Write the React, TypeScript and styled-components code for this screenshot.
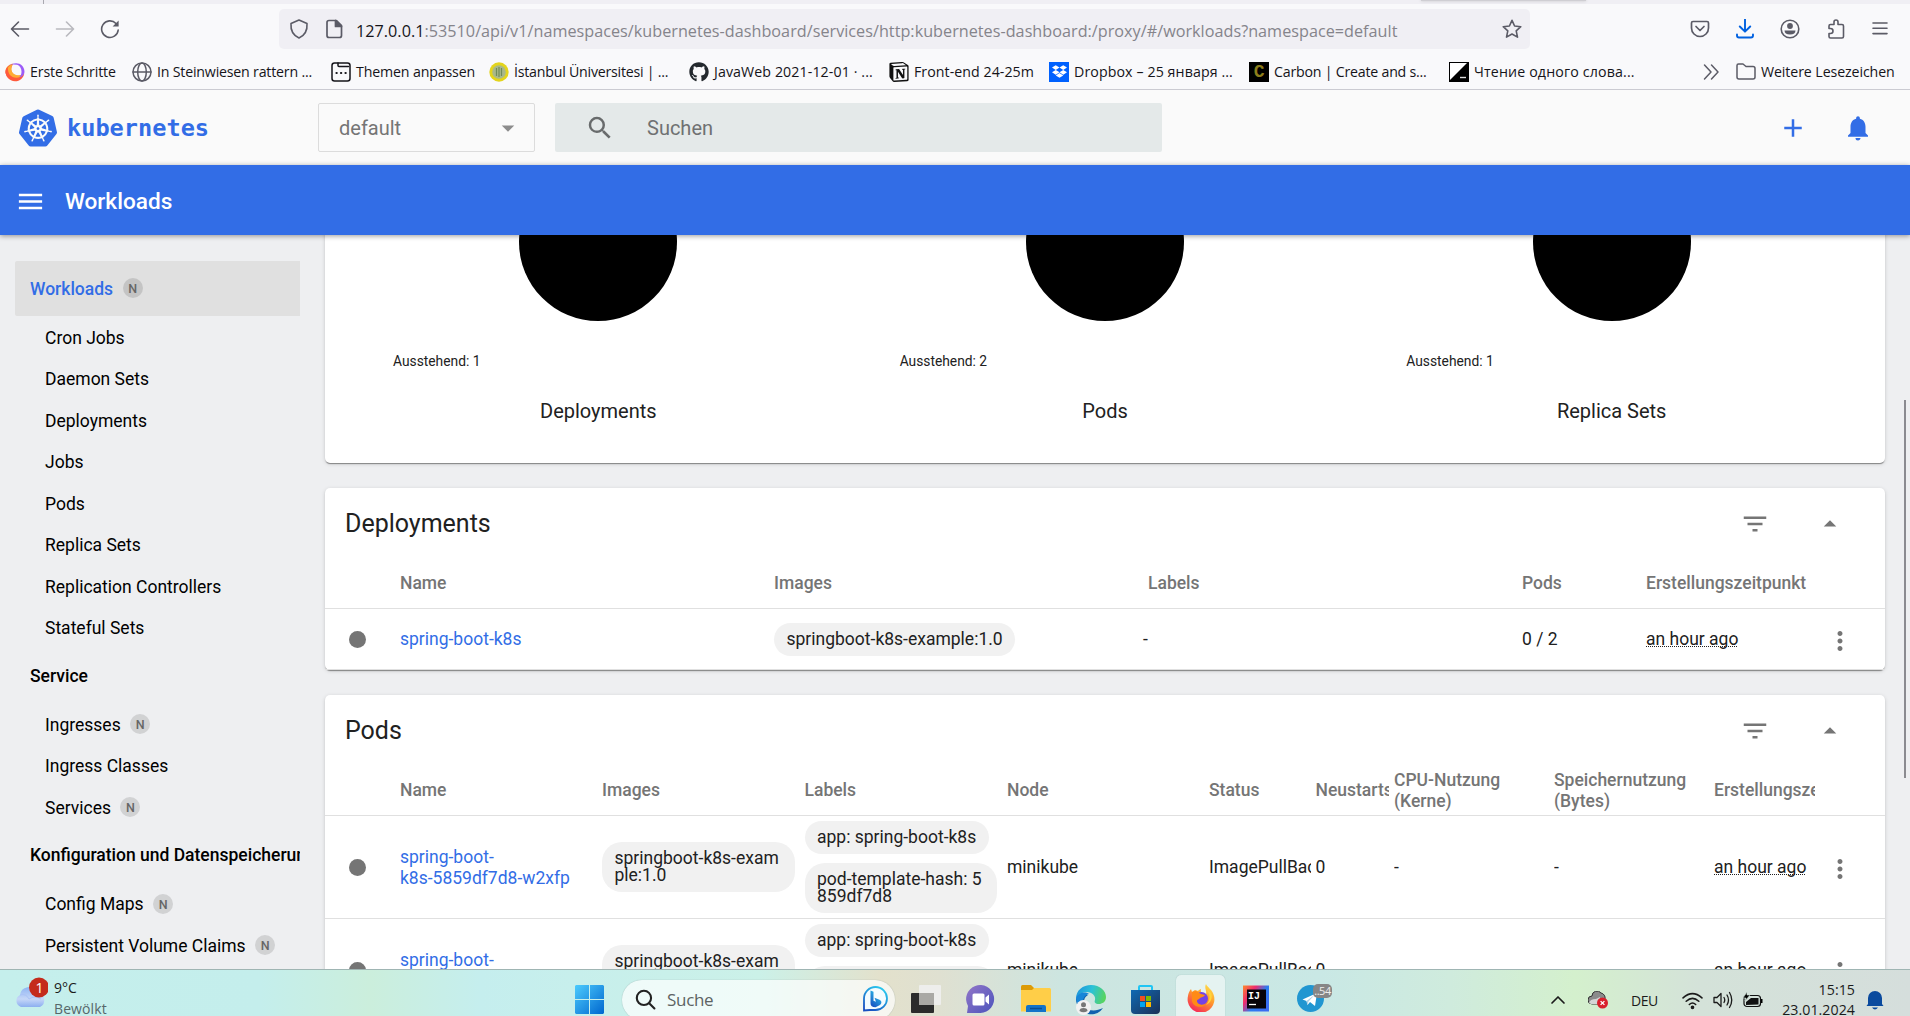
import React from "react";
import styled, { createGlobalStyle } from "styled-components";
import { MdAdd, MdNotifications, MdFilterList, MdArrowDropUp, MdArrowDropDown, MdMoreVert, MdSearch, MdMenu } from "react-icons/md";
import { SiKubernetes, SiNotion, SiDropbox } from "react-icons/si";
import { FaGithub } from "react-icons/fa";

const UI = `"Open Sans", "Noto Sans", sans-serif`;
const BLUE = "#326de6";

const Global = createGlobalStyle`
  * { box-sizing: border-box; }
  body { margin: 0; background: #eeeff1; overflow: hidden; }
  svg { display: block; flex: none; }
`;

const Screen = styled.div`
  width: 1910px;
  height: 1016px;
  overflow: hidden;
  display: flex;
  flex-direction: column;
  font-family: Roboto, sans-serif;
`;

/* ---------- browser chrome ---------- */
const TabEdge = styled.div`
  height: 4px;
  flex: none;
  background: #f0eff4;
  display: flex;
  i { margin-left: 43px; width: 1px; background: #a9a9b0; }
  b { margin-left: 1377px; width: 165px; height: 1px; background: #cfced3; box-shadow: 0 0 3px #aaa; }
`;
const NavBar = styled.div`
  height: 50px;
  flex: none;
  background: #f9f9fb;
  display: flex;
  align-items: center;
  color: #5b5b66;
`;
const NavSlot = styled.div<{ $w: number; $dim?: boolean; $c?: string }>`
  width: ${(p) => p.$w}px;
  flex: none;
  display: flex;
  justify-content: center;
  opacity: ${(p) => (p.$dim ? 0.4 : 1)};
  color: ${(p) => p.$c || "inherit"};
`;
const UrlBar = styled.div`
  width: 1251px;
  height: 40px;
  margin: 0 147px 0 150px;
  background: #f0eff4;
  border-radius: 5px;
  display: flex;
  align-items: center;
  padding-left: 2px;
`;
const Url = styled.div`
  flex: 1;
  padding: 3px 0 0 5px;
  font: 16.2px/24px ${UI};
  letter-spacing: 0.02px;
  color: #85848b;
  white-space: nowrap;
  span { color: #15141a; }
`;
const Bookmarks = styled.div`
  height: 36px;
  flex: none;
  background: #f9f9fb;
  border-bottom: 1px solid #cbcbd2;
  display: flex;
  align-items: center;
  padding-left: 5px;
`;
const Mark = styled.div<{ $w: number; $ls?: number }>`
  width: ${(p) => p.$w}px;
  flex: none;
  display: flex;
  align-items: center;
  gap: 5px;
  font: 14.2px/20px ${UI};
  letter-spacing: ${(p) => (p.$ls || 0) - 0.1}px;
  color: #15141a;
  white-space: nowrap;
  span { padding-top: 1px; }
`;
const DropTile = styled.div`
  width: 20px;
  height: 20px;
  background: #0061fe;
  color: #fff;
  display: flex;
  align-items: center;
  justify-content: center;
`;
const CarbonTile = styled.div`
  width: 20px;
  height: 20px;
  background: #000;
  color: #8d7f1c;
  font: bold 18px/20px "Liberation Mono", monospace;
  text-align: center;
`;

/* ---------- dashboard header ---------- */
const Header = styled.header`
  height: 75px;
  flex: none;
  background: #fafafa;
  display: flex;
  align-items: center;
  padding-left: 19px;
`;
const Brand = styled.div`
  width: 299px;
  display: flex;
  align-items: center;
  color: ${BLUE};
  font: bold 23.6px/30px "DejaVu Sans Mono", monospace;
  gap: 10px;
`;
const Namespace = styled.div`
  width: 217px;
  height: 49px;
  border: 1px solid #dcdcdc;
  border-radius: 2px;
  padding: 0 11px 0 20px;
  display: flex;
  align-items: center;
  justify-content: space-between;
  font-size: 20px;
  color: #757575;
`;
const SearchBox = styled.div`
  width: 607px;
  height: 49px;
  margin-left: 20px;
  background: #e4e9e9;
  border-radius: 2px;
  display: flex;
  align-items: center;
  gap: 32px;
  padding-left: 30px;
  font-size: 20px;
  color: #6f7172;
  span { padding-top: 1px; }
`;
const HeaderActions = styled.div`
  margin-left: auto;
  padding: 1px 37px 0 0;
  display: flex;
  gap: 35px;
  color: ${BLUE};
`;
const TitleBar = styled.div`
  height: 70px;
  flex: none;
  background: ${BLUE};
  color: #fff;
  display: flex;
  align-items: center;
  gap: 19px;
  padding: 2px 0 0 15px;
  font-size: 22.6px;
  font-weight: 500;
  box-shadow: 0 1px 5px rgba(0, 0, 0, 0.4);
  z-index: 1;
`;

/* ---------- sidebar ---------- */
const Body = styled.div`
  height: 734px;
  flex: none;
  display: flex;
  background: #eeeff1;
  overflow: hidden;
`;
const Side = styled.nav`
  width: 325px;
  flex: none;
  padding: 26px 25px 0 15px;
`;
const Group = styled.div<{ $active?: boolean }>`
  height: 55px;
  padding: 0 0 0 15px;
  border-radius: 2px 0 0 2px;
  background: ${(p) => (p.$active ? "#e0e0e0" : "transparent")};
  color: ${(p) => (p.$active ? BLUE : "#000")};
  display: flex;
  align-items: center;
  font-size: 17.5px;
  font-weight: 500;
  white-space: nowrap;
  overflow: hidden;
`;
const Item = styled.div`
  height: 41.5px;
  padding: 1.5px 0 0 30px;
  display: flex;
  align-items: center;
  font-size: 17.5px;
  color: #000;
`;
const Badge = styled.span`
  width: 20px;
  height: 20px;
  margin: 0 0 1px 9.5px;
  border-radius: 50%;
  background: rgba(0, 0, 0, 0.12);
  color: #666;
  font: 500 12.5px/22px Roboto, sans-serif;
  text-align: center;
`;

/* ---------- content ---------- */
const Content = styled.main`
  width: 1560px;
  flex: none;
  display: flex;
  flex-direction: column;
  gap: 25px;
`;
const Card = styled.section`
  flex: none;
  background: #fff;
  border-radius: 5px;
  box-shadow: 0 2px 1px -1px rgba(0, 0, 0, 0.28), 0 1px 1px rgba(0, 0, 0, 0.16), 0 1px 4px rgba(0, 0, 0, 0.14);
  color: #212121;
`;
const Charts = styled(Card)`
  height: 320px;
  margin-top: -92px;
  padding: 20px 20px 0;
  display: grid;
  grid-template-columns: repeat(3, 1fr);
`;
const Chart = styled.div`
  display: flex;
  flex-direction: column;
  align-items: center;
`;
const Disc = styled.div`
  width: 158px;
  height: 158px;
  border-radius: 50%;
  background: #000;
`;
const Legend = styled.div`
  align-self: flex-start;
  margin: 30px 0 0 48px;
  font-size: 13.8px;
  line-height: 20px;
`;
const ChartName = styled.div`
  margin-top: 28px;
  font-size: 20px;
  line-height: 24px;
`;
const CardHead = styled.div`
  height: 71px;
  display: flex;
  align-items: center;
  padding: 0 40px 0 20px;
  font-size: 25px;
  color: #212121;
  svg { color: #757575; }
  svg:first-of-type { margin-left: auto; margin-right: 45px; }
`;
const DEPLOY_COLS = "75px 374px 374px 374px 124px 169px 50px";
const POD_COLS = "75px 202px 202.5px 202.5px 202px 106.5px 78.5px 160px 160px 101px 50px";
const Row = styled.div<{ $cols: string; $h: number; $head?: boolean }>`
  display: grid;
  grid-template-columns: ${(p) => p.$cols};
  height: ${(p) => p.$h}px;
  border-bottom: 1px solid #e0e0e0;
  align-items: center;
  font-size: 17.5px;
  line-height: 21px;
  font-weight: ${(p) => (p.$head ? 500 : 400)};
  color: ${(p) => (p.$head ? "#757575" : "#212121")};
`;
const Cell = styled.div<{ $clip?: boolean }>`
  overflow: hidden;
  margin-right: ${(p) => (p.$clip ? 5 : 0)}px;
  white-space: nowrap;
`;
const Dash = styled.div`
  margin-left: -5px;
`;
const Dot = styled.div`
  width: 17px;
  height: 17px;
  margin-left: 24px;
  border-radius: 50%;
  background: #757575;
`;
const Link = styled.a<{ $two?: boolean }>`
  color: ${BLUE};
  padding-top: ${(p) => (p.$two ? 2 : 0)}px;
`;
const Ago = styled.span`
  text-decoration: underline dotted 1px;
  text-decoration-skip-ink: none;
  text-underline-offset: 1px;
`;
const Chips = styled.div`
  display: flex;
  flex-direction: column;
  align-items: flex-start;
  gap: 9px;
`;
const Chip = styled.div<{ $w?: number }>`
  width: ${(p) => (p.$w ? `${p.$w}px` : "auto")};
  padding: 8px 12.5px;
  border-radius: 20px;
  background: #f1f1f1;
  line-height: 17px;
  white-space: nowrap;
`;
const Menu = styled.div`
  display: flex;
  justify-content: center;
  color: #757575;
  padding-top: 3px;
`;
const ScrollThumb = styled.div`
  width: 2px;
  height: 378px;
  margin: 165px 0 0 19px;
  background: #8b8b90;
`;

/* ---------- taskbar ---------- */
const Taskbar = styled.footer`
  height: 47px;
  flex: none;
  border-top: 1px solid #9fb5b3;
  background: linear-gradient(90deg, #c5efec 0, #c4eeec 260px, #cbeedc 370px, #c5eeee 480px, #cbf1e8 760px, #e3e1cc 880px, #dfe0d1 940px, #cde5e0 1060px, #c9e8e5 1320px, #cfebdd 1450px, #d4f0cd 1575px, #d4e2d9 1700px, #d5dedc 1910px);
  font-family: ${UI};
  display: flex;
  color: #1b1b1b;
`;
const Weather = styled.div`
  width: 560px;
  flex: none;
  padding: 7px 0 0 13px;
  display: flex;
  gap: 6px;
  white-space: nowrap;
  font-size: 14px;
  line-height: 20px;
  div { padding-top: 1px; }
  small { font-size: 14px; line-height: 21px; color: #56676a; display: block; letter-spacing: 0.1px; }
`;
const Slot = styled.div<{ $w: number; $active?: boolean }>`
  width: ${(p) => p.$w}px;
  flex: none;
  position: relative;
  display: flex;
  justify-content: center;
  padding-top: 15px;
  ${(p) => p.$active && "margin: 5px 3px 0; padding-top: 9px; border-radius: 5px 5px 0 0; background: rgba(255,255,255,.5); box-shadow: 0 0 1px #8aa;"}
`;
const Pill = styled.div`
  width: 273px;
  height: 40px;
  flex: none;
  margin: 10px 3px 0;
  padding: 0 7px 2px 13px;
  border-radius: 20px;
  background: rgba(255, 255, 255, 0.7);
  box-shadow: 0 0 1px #8a9a98;
  display: flex;
  align-items: center;
  font-size: 17px;
  color: #5d6363;
  span { flex: 1; padding-left: 11px; letter-spacing: -0.3px; }
`;
const Count = styled.div`
  position: absolute;
  left: 30px;
  top: 14px;
  width: 19px;
  height: 14px;
  border-radius: 5px;
  background: #868686;
  color: #eee;
  font-size: 11px;
  line-height: 14px;
  text-align: center;
  letter-spacing: -0.5px;
`;
const Tray = styled.div`
  margin-left: auto;
  display: flex;
  align-items: center;
  height: 60px;
  padding-right: 25px;
`;
const Spacer = styled.div<{ $w: number }>`
  width: ${(p) => p.$w}px;
`;
const Lang = styled.div`
  margin: 0 23px;
  width: 28px;
  font-size: 14px;
  letter-spacing: -0.5px;
`;
const Clock = styled.div`
  width: 92px;
  margin-right: 10px;
  text-align: right;
  font-size: 14.2px;
  line-height: 20px;
  letter-spacing: 0.05px;
  white-space: nowrap;
`;

type P = { s?: number };
const Line = ({ d, s = 20, w = 1.6, c = "currentColor", children }: { d?: string; s?: number; w?: number; c?: string; children?: React.ReactNode }) => (
  <svg width={s} height={s} viewBox="0 0 20 20" fill="none" stroke={c} strokeWidth={w} strokeLinecap="round" strokeLinejoin="round">
    {d && <path d={d} />}
    {children}
  </svg>
);

const Firefox = ({ s = 28, light }: P & { light?: boolean }) => {
  const id = light ? "fl" : "fd";
  return (
    <svg width={s} height={s} viewBox="0 0 28 28">
      <defs>
        <linearGradient id={id} x1=".8" y1="0" x2=".25" y2="1">
          <stop offset="0" stopColor={light ? "#a95cf5" : "#ffe14a"} />
          <stop offset=".45" stopColor="#ff9a2c" />
          <stop offset="1" stopColor="#f5225c" />
        </linearGradient>
      </defs>
      {light ? (
        <>
          <path d="M10 2.500C4 4 0 9 .5 15.500a13.500 12.500 0 0 0 26.500-1C27 20 12 22 9 13 7 8 9 5 12 2Z" fill="url(#fl)" />
          <path d="M1 12c-1 8 5 15 13 15 7 0 12-5 13-11-4 5-13 6-17 0-2-4-2-9 1-13C6 4 2 7 1 12Z" fill="#ff5a3c" />
          <path d="M4 8c0 8 4 14 12 14 4 0 8-2 10-5-5 3-13 2-16-3-2-4-1-8 1-11C8 4 6 5 4 8Z" fill="#ffac33" />
          <path d="M9 3.500C18-2 29 5 27 15.500c-1 4-4 6-7 6 5-5 4-15-3-17.500q-4-1-8-.5Z" fill="#9c5cf8" />
        </>
      ) : (
        <>
          <path d="M19 0c1 3 7 6 8 12a13.400 13.400 0 1 1-26 0c.3-3 1.500-5 3-7l1 3 3-2 3 1c1-1 2-2 3-2-.5 2 0 3 1 4l4 1c1-3-2-6 0-10Z" fill={`url(#${id})`} />
          <circle cx="14.500" cy="14.500" r="6.500" fill="#7542e5" />
          <path d="M5 8l4-1 5 3 4 1c-1 2-4 2-5 3-1 2-3 1-3 3 0 3 5 5 9 3-4 5-13 3-14-3Z" fill="#ff8a16" />
          <path d="M20 6c4 5 3 11-1 15 5-2 7-8 5-12Z" fill="#ffd43a" />
        </>
      )}
    </svg>
  );
};

const Seal = () => (
  <svg width="20" height="20" viewBox="0 0 20 20">
    <circle cx="10" cy="10" r="9.700" fill="#e3d41c" />
    <circle cx="10" cy="10" r="6.800" fill="#a9b88a" />
    <path d="M7.500 6v8M10 5v10M12.500 6v8" stroke="#6f8a5a" strokeWidth="1.200" />
  </svg>
);

const Themes = () => (
  <Line s={20} c="#15141a" w={1.5}>
    <rect x="1" y="1" width="18" height="18" rx="2.500" />
    <path d="M7 1v2.500q0 1 1 1h9.500" />
    <path d="M5.500 11h.2M10 11h.2M14.500 11h.2" strokeWidth="2.200" />
  </Line>
);

const Globe = () => (
  <Line c="#5b5b66" w={1.5}>
    <circle cx="10" cy="10" r="9" />
    <ellipse cx="10" cy="10" rx="4.300" ry="9" />
    <path d="M1 10h18" />
  </Line>
);

const ReaderTile = () => (
  <svg width="20" height="20" viewBox="0 0 20 20">
    <path d="M0 0h20v20H0z" />
    <path d="M1 1h17L1 18z" fill="#fff" />
    <path d="M11 15.500h6" stroke="#ddd" strokeWidth="1.400" />
  </svg>
);

const Cloud = () => (
  <svg width="35" height="32" viewBox="0 0 35 32">
    <defs>
      <linearGradient id="cl" x1="0" y1="0" x2="0" y2="1">
        <stop offset="0" stopColor="#8fb5f3" />
        <stop offset=".6" stopColor="#c6d7f8" />
        <stop offset="1" stopColor="#8caff0" />
      </linearGradient>
    </defs>
    <path d="M8 30a6.500 6.500 0 0 1-1-12a9 9 0 0 1 17-3a8 8 0 0 1 3 15Z" fill="url(#cl)" />
    <path d="M7 18q6-2 9 4q6-4 12 0" stroke="#aac3f6" fill="none" />
    <circle cx="26" cy="10.500" r="10" fill="#c42b1c" />
    <text x="26.500" y="15.500" textAnchor="middle" fontSize="14" fill="#fff" fontFamily="Open Sans">1</text>
  </svg>
);

const WindowsLogo = () => (
  <svg width="29" height="29" viewBox="0 0 29 29">
    <defs>
      <linearGradient id="wn" gradientUnits="userSpaceOnUse" x1="0" y1="0" x2="29" y2="29">
        <stop offset="0" stopColor="#4ccbfd" />
        <stop offset="1" stopColor="#0067cf" />
      </linearGradient>
    </defs>
    <path d="M1 0h13v14H0V1zM15 0h13l1 1v13H15zM0 15h14v14H1l-1-1zM15 15h14v13l-1 1H15z" fill="url(#wn)" />
  </svg>
);

const Bing = () => (
  <svg width="25" height="26" viewBox="0 0 25 26">
    <defs>
      <linearGradient id="bg" x1=".8" y1="0" x2=".2" y2="1">
        <stop offset="0" stopColor="#2bcdf0" />
        <stop offset="1" stopColor="#174fc0" />
      </linearGradient>
    </defs>
    <path d="M1 24.500V12.500a11.500 11.500 0 1 1 11.500 11.500H7z" fill="#f4fcff" stroke="url(#bg)" strokeWidth="1.800" />
    <path d="M7.500 4.500l3 1.200v9l2.500 1-1.500-4 5 2c3 1.500 2 4.500 0 5.500l-4 2q-5 0-5-4z" fill="url(#bg)" />
  </svg>
);

const TaskView = () => (
  <svg width="30" height="28" viewBox="0 0 30 28">
    <rect x="0" y="8" width="23" height="20" rx="1" fill="#2b2b2b" />
    <rect x="8" y="0" width="22" height="20" rx="1" fill="#eeeeec" />
    <path d="M8 8h15v12H8z" fill="#aaa9a5" />
  </svg>
);

const Chat = () => (
  <svg width="29" height="29" viewBox="0 0 29 29">
    <defs>
      <linearGradient id="ct" x1="0" y1="0" x2="1" y2="1">
        <stop offset="0" stopColor="#9376c8" />
        <stop offset="1" stopColor="#4b53bc" />
      </linearGradient>
    </defs>
    <path d="M1 28l1-7a14 14 0 1 1 12.500 7Z" fill="url(#ct)" />
    <rect x="6.500" y="8.500" width="12" height="12" rx="1.500" fill="#fff" />
    <path d="M19.500 12.500l3.500-3v10l-3.500-3z" fill="#fff" />
  </svg>
);

const Folder = () => (
  <svg width="30" height="28" viewBox="0 0 30 28">
    <path d="M0 1.500Q0 0 1.500 0H10l3 3v6H0z" fill="#dd9b07" />
    <path d="M0 5h11l2-2h15.500Q30 3 30 4.500V26.500H0z" fill="#ffce48" />
    <path d="M5 27v-5q0-2 2-2h16q2 0 2 2v5z" fill="#1373c9" />
    <path d="M9 23.500h12" stroke="#0a4d92" strokeWidth="1.500" />
  </svg>
);

const Edge = () => (
  <svg width="30" height="30" viewBox="0 0 30 30">
    <defs>
      <linearGradient id="eg" x1="0" y1=".3" x2="1" y2=".5">
        <stop offset="0" stopColor="#1c93dc" />
        <stop offset=".5" stopColor="#2bc2d7" />
        <stop offset="1" stopColor="#58d45d" />
      </linearGradient>
    </defs>
    <path d="M0 14C0 5 7 0 15 0c9 0 15 6 15 12 0 5-4 7-7 7-4 0-5-2-4-4 1-4-3-8-8-8C6 7 2 10 0 14Z" fill="url(#eg)" />
    <path d="M0 14c2-5 8-6 12-4-4 2-5 7-3 11 3 5 10 6 18 2-4 6-10 7-15 6C4 27 0 20 0 14Z" fill="#1161ae" />
    <path d="M0 13c2-5 9-7 13-4-5 1-7 6-6 10L1 18Z" fill="#1686d8" />
    <circle cx="7.500" cy="22.500" r="7.500" fill="#f2f2f2" />
    <circle cx="7.500" cy="19.800" r="2.500" fill="#777" />
    <path d="M3.500 26q0-3 4-3t4 3q-4 2.500-8 0" fill="#777" />
  </svg>
);

const Store = () => (
  <svg width="29" height="29" viewBox="0 0 29 29">
    <defs>
      <linearGradient id="st" x1="0" y1="0" x2="1" y2="1">
        <stop offset="0" stopColor="#0f69b4" />
        <stop offset="1" stopColor="#1c3156" />
      </linearGradient>
    </defs>
    <path d="M8 7V2q0-1 1-1h11q1 0 1 1v5" stroke="#20c5f4" strokeWidth="2" fill="none" />
    <path d="M0 5h29v20q0 4-4 4H4q-4 0-4-4z" fill="url(#st)" />
    <path d="M9 11h5v5H9z" fill="#f25022" />
    <path d="M15 11h5v5h-5z" fill="#7fba00" />
    <path d="M9 17h5v5H9z" fill="#00a4ef" />
    <path d="M15 17h5v5h-5z" fill="#ffb900" />
  </svg>
);

const Idea = () => (
  <svg width="26" height="27" viewBox="0 0 26 26">
    <defs>
      <linearGradient id="ij" x1="0" y1="0" x2="1" y2=".7">
        <stop offset="0" stopColor="#fd8a2b" />
        <stop offset=".35" stopColor="#ef2b6e" />
        <stop offset=".65" stopColor="#2a7df0" />
        <stop offset="1" stopColor="#3a6bf2" />
      </linearGradient>
    </defs>
    <path d="M0 0h26v26H0z" fill="url(#ij)" />
    <path d="M4 4h19v19H4z" fill="#070309" />
    <text x="5" y="13" fontSize="10" fontWeight="bold" fill="#fff" fontFamily="Liberation Mono">IJ</text>
    <path d="M6 19h7" stroke="#fff" strokeWidth="1.300" />
  </svg>
);

const Telegram = () => (
  <svg width="27" height="27" viewBox="0 0 27 27">
    <circle cx="13.500" cy="13.500" r="13.500" fill="#2196d1" />
    <path d="M5.500 14.500L20 8l-2 13-5-4-2.500 3-1-4z" fill="#fff" />
    <path d="M9.500 16l8-6-6 6.500-1 3.500z" fill="#a9cfe6" />
  </svg>
);

const CloudError = () => (
  <svg width="20" height="18" viewBox="0 0 20 18">
    <path d="M4 13a4 4 0 0 1 0-8a5 5 0 0 1 9-3a5 5 0 0 1 4 6v5z" fill="#8b8b8b" stroke="#333" />
    <path d="M1 12q1-4 7-4l4-2v7H3z" fill="#d5d5d5" />
    <circle cx="14.500" cy="12" r="5.500" fill="#d9202d" />
    <path d="M12.600 10.100l3.800 3.800m0-3.800l-3.800 3.800" stroke="#fff" strokeWidth="1.300" />
  </svg>
);

const Battery = () => (
  <svg width="20" height="18" viewBox="0 0 20 16">
    <rect x="1" y="3.500" width="16.500" height="11" rx="3" fill="none" stroke="#111" strokeWidth="1.200" />
    <path d="M3 13V10l5-4h7.500v6.500z" fill="#111" />
    <path d="M18 7h1.500v4H18z" />
    <path d="M4 0L0 6h3L2 9l5-6H4z" stroke="#cddfd5" strokeWidth=".6" />
  </svg>
);

const TrayBell = () => (
  <svg width="20" height="20" viewBox="0 0 20 20">
    <path d="M3 14V8a7 7 0 0 1 14 0v6l1.500 2h-17zM7 17.500h6q-3 4-6 0" fill="#0a4a9e" />
  </svg>
);

const bookmarks: { w: number; t: string; ls?: number; icon: React.ReactNode }[] = [
  { w: 127, t: "Erste Schritte", ls: -0.05, icon: <Firefox s={20} light /> },
  { w: 199, t: "In Steinwiesen rattern ...", ls: -0.1, icon: <Globe /> },
  { w: 158, t: "Themen anpassen", ls: -0.05, icon: <Themes /> },
  { w: 200, t: "İstanbul Üniversitesi | ...", ls: -0.13, icon: <Seal /> },
  { w: 200, t: "JavaWeb 2021-12-01 · ...", ls: 0.2, icon: <FaGithub size={20} color="#24292e" /> },
  { w: 160, t: "Front-end 24-25m", ls: 0.15, icon: <SiNotion size={20} color="#111" /> },
  { w: 200, t: "Dropbox – 25 января ...", ls: 0.2, icon: <DropTile><SiDropbox size={15} /></DropTile> },
  { w: 200, t: "Carbon | Create and s...", ls: -0.12, icon: <CarbonTile>C</CarbonTile> },
  { w: 252, t: "Чтение одного слова...", ls: 0.25, icon: <ReaderTile /> },
];

const nav: { title: string; active?: boolean; badge?: boolean; items: [string, boolean?][] }[] = [
  {
    title: "Workloads", active: true, badge: true,
    items: [["Cron Jobs"], ["Daemon Sets"], ["Deployments"], ["Jobs"], ["Pods"], ["Replica Sets"], ["Replication Controllers"], ["Stateful Sets"]],
  },
  { title: "Service", items: [["Ingresses", true], ["Ingress Classes"], ["Services", true]] },
  { title: "Konfiguration und Datenspeicherung", items: [["Config Maps", true], ["Persistent Volume Claims", true]] },
];

const Head = ({ children }: { children: React.ReactNode }) => (
  <CardHead>
    {children}
    <MdFilterList size={30} />
    <MdArrowDropUp size={30} />
  </CardHead>
);

const PodRow = ({ tail }: { tail: string }) => (
  <Row $cols={POD_COLS} $h={103}>
    <Dot />
    <Link $two>spring-boot-<br />{tail}</Link>
    <Chips><Chip $w={193}>springboot-k8s-exam<br />ple:1.0</Chip></Chips>
    <Chips>
      <Chip>app: spring-boot-k8s</Chip>
      <Chip $w={192}>pod-template-hash: 5<br />859df7d8</Chip>
    </Chips>
    <Cell>minikube</Cell>
    <Cell $clip>ImagePullBackOff</Cell>
    <Cell>0</Cell>
    <Cell>-</Cell>
    <Cell>-</Cell>
    <Cell><Ago>an hour ago</Ago></Cell>
    <Menu><MdMoreVert size={30} /></Menu>
  </Row>
);

export default function App() {
  return (
    <Screen>
      <Global />
      <TabEdge><i /><b /></TabEdge>
      <NavBar>
        <NavSlot $w={40}><Line d="M18.500 10H2M8.500 3L1.500 10l7 7" /></NavSlot>
        <NavSlot $w={50} $dim><Line d="M1.500 10H18M11.500 3l7 7l-7 7" /></NavSlot>
        <NavSlot $w={39}>
          <Line d="M18.200 11A8.300 8.300 0 1 1 16 4.500"><path d="M18.600 1.500v6h-6z" fill="currentColor" stroke="none" /></Line>
        </NavSlot>
        <UrlBar>
          <NavSlot $w={35}><Line d="M10 1L18 4.500C18.500 11 15.500 16.500 10 19C4.500 16.500 1.500 11 2 4.500Z" /></NavSlot>
          <NavSlot $w={35}><Line w={1.700} d="M5 1.500h7.500l5 5V16.500q0 2-2 2H5q-2 0-2-2V3.500q0-2 2-2Z"><path d="M11.500 1.500v6h6z" fill="currentColor" /></Line></NavSlot>
          <Url><span>127.0.0.1</span>:53510/api/v1/namespaces/kubernetes-dashboard/services/http:kubernetes-dashboard:/proxy/#/workloads?namespace=default</Url>
          <NavSlot $w={37}><Line d="M10 1.300l2.600 5.700l6.200.7l-4.600 4.200l1.300 6.200L10 15l-5.500 3.100l1.300-6.200L1.200 7.700l6.200-.7z" /></NavSlot>
        </UrlBar>
        <NavSlot $w={46}><Line w={1.700} d="M3 2.500h14q1.500 0 1.500 1.500v5a8.500 8.500 0 0 1-17 0V4q0-1.500 1.500-1.500ZM6 7.500l4 4l4-4" /></NavSlot>
        <NavSlot $w={44} $c="#0061e0"><Line w={1.900} d="M10 0v12M4.800 7.500L10 12.700l5.200-5.200M2 15.500v1q0 2 2 2h12q2 0 2-2v-1" /></NavSlot>
        <NavSlot $w={46}>
          <Line><circle cx="10" cy="10" r="8.800" /><circle cx="10" cy="7" r="2.900" fill="currentColor" stroke="none" /><path d="M4.500 11.500h11q0 4-5.500 4t-5.500-4Z" fill="currentColor" stroke="none" /></Line>
        </NavSlot>
        <NavSlot $w={46}><Line d="M3 9.500V7q0-1.500 1.500-1.500H8V3q0-2 2-2t2 2v2.500h4q1.500 0 1.500 1.500v10.500q0 1.500-1.500 1.500H4.500Q3 19 3 17.500V14.500h1.500q2.500 0 2.500-2.500t-2.500-2.500Z" /></NavSlot>
        <NavSlot $w={42}><Line d="M3 4h14M3 9.300h14M3 14.600h14" /></NavSlot>
      </NavBar>
      <Bookmarks>
        {bookmarks.map((b) => (
          <Mark key={b.t} $w={b.w} $ls={b.ls}>{b.icon}<span>{b.t}</span></Mark>
        ))}
        <Mark $w={35}><Line c="#5b5b66" d="M3.500 3l6.500 7l-6.500 7M10.500 3l6.500 7l-6.500 7" w={1.500} /></Mark>
        <Mark $w={170}><Line c="#5b5b66" w={1.500} d="M2.500 2H7l3 2.500h7q2 0 2 2V15q0 2-2 2H3q-2 0-2-2V3.500Q1 2 2.500 2Z" /><span>Weitere Lesezeichen</span></Mark>
      </Bookmarks>

      <Header>
        <Brand><SiKubernetes size={38} />kubernetes</Brand>
        <Namespace>default<MdArrowDropDown size={30} color="#8c8c8c" /></Namespace>
        <SearchBox><MdSearch size={30} color="#686b6c" /><span>Suchen</span></SearchBox>
        <HeaderActions><MdAdd size={30} /><MdNotifications size={30} /></HeaderActions>
      </Header>
      <TitleBar><MdMenu size={31} />Workloads</TitleBar>

      <Body>
        <Side>
          {nav.map((g) => (
            <React.Fragment key={g.title}>
              <Group $active={g.active}>{g.title}{g.badge && <Badge>N</Badge>}</Group>
              {g.items.map(([t, n]) => (
                <Item key={t}>{t}{n && <Badge>N</Badge>}</Item>
              ))}
            </React.Fragment>
          ))}
        </Side>
        <Content>
          <Charts>
            {[["1", "Deployments"], ["2", "Pods"], ["1", "Replica Sets"]].map(([n, t]) => (
              <Chart key={t}>
                <Disc />
                <Legend>Ausstehend: {n}</Legend>
                <ChartName>{t}</ChartName>
              </Chart>
            ))}
          </Charts>
          <Card>
            <Head>Deployments</Head>
            <Row $cols={DEPLOY_COLS} $h={50} $head>
              <span /><Cell>Name</Cell><Cell>Images</Cell><Cell>Labels</Cell><Cell>Pods</Cell><Cell>Erstellungszeitpunkt</Cell>
            </Row>
            <Row $cols={DEPLOY_COLS} $h={61}>
              <Dot />
              <Link>spring-boot-k8s</Link>
              <Chips><Chip>springboot-k8s-example:1.0</Chip></Chips>
              <Dash>-</Dash>
              <Cell>0 / 2</Cell>
              <Cell><Ago>an hour ago</Ago></Cell>
              <Menu><MdMoreVert size={30} /></Menu>
            </Row>
          </Card>
          <Card>
            <Head>Pods</Head>
            <Row $cols={POD_COLS} $h={50} $head>
              <span /><Cell>Name</Cell><Cell>Images</Cell><Cell>Labels</Cell><Cell>Node</Cell><Cell>Status</Cell>
              <Cell $clip>Neustarts</Cell><Cell>CPU-Nutzung<br />(Kerne)</Cell><Cell>Speichernutzung<br />(Bytes)</Cell><Cell>Erstellungszeitpunkt</Cell>
            </Row>
            <PodRow tail="k8s-5859df7d8-w2xfp" />
            <PodRow tail="k8s-5859df7d8-x7k2m" />
          </Card>
        </Content>
        <ScrollThumb />
      </Body>

      <Taskbar>
        <Weather>
          <Cloud />
          <div>9°C<small>Bewölkt</small></div>
        </Weather>
        <Slot $w={59}><WindowsLogo /></Slot>
        <Pill>
          <Line s={21} c="#222" w={2}><circle cx="8.500" cy="8.500" r="6.800" /><path d="M13.500 13.500l5 5" /></Line>
          <span>Suche</span>
          <Bing />
        </Pill>
        <Slot $w={55}><TaskView /></Slot>
        <Slot $w={55}><Chat /></Slot>
        <Slot $w={55}><Folder /></Slot>
        <Slot $w={55}><Edge /></Slot>
        <Slot $w={55}><Store /></Slot>
        <Slot $w={49} $active><Firefox s={28} /></Slot>
        <Slot $w={55}><Idea /></Slot>
        <Slot $w={55}><Telegram /><Count>..54</Count></Slot>
        <Tray>
          <Line s={20} c="#1b1b1b" w={1.700} d="M4 13l6-6l6 6" />
          <Spacer $w={20} />
          <CloudError />
          <Lang>DEU</Lang>
          <Line s={21} c="#1b1b1b" w={1.500}>
            <path d="M1 7.500q9-8 18 0M4 10.700q6-5.400 12 0M7 13.800q3-2.800 6 0" /><circle cx="10" cy="16.500" r="1" fill="#1b1b1b" />
          </Line>
          <Spacer $w={10} />
          <Line s={20} c="#1b1b1b" w={1.300} d="M1 7.500v5h3l4 4V3.500l-4 4ZM11 7.500q1.500 2.500 0 5M14 5q3 5 0 10M16.500 2.500q4.500 7.500 0 15" />
          <Spacer $w={10} />
          <Battery />
          <Clock>15:15<br />23.01.2024</Clock>
          <TrayBell />
        </Tray>
      </Taskbar>
    </Screen>
  );
}
